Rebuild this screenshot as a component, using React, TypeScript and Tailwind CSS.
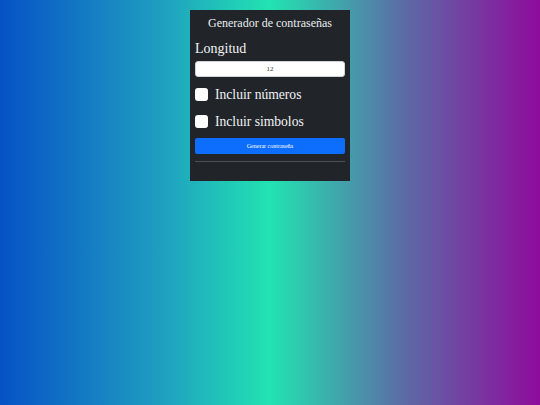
import React, { useState } from 'react'

export default function App() {
  const [length, setLength] = useState('12')
  const [numbers, setNumbers] = useState(false)
  const [symbols, setSymbols] = useState(false)

  return (
    <div
      className="w-[540px] h-[405px] bg-[linear-gradient(to_right,#0652c6,#1f9fc0_30%,#22e3b1_50%,#5d6aa6_75%,#8e0b9c)] pt-[10px] flex justify-center items-start"
      style={{ fontFamily: '"Liberation Serif", serif' }}
    >
      <div className="w-[160px] bg-[#212529] px-[5px] pt-[6px] pb-[19px] flex flex-col">
        <h1 className="text-[12px] leading-[15px] text-[#e9ecef] text-center">Generador de contraseñas</h1>
        <label className="mt-[9px] text-[14px] leading-[17px] text-[#f1f3f5]">Longitud</label>
        <input
          value={length}
          onChange={(e) => setLength(e.target.value)}
          className="mt-[4px] h-[16px] w-full rounded-[3px] bg-white border border-[#ced4da] text-center text-[7px] text-[#333] outline-none"
        />
        <label className="mt-[11px] flex items-center gap-[7px] text-[13.6px] leading-[13px] text-[#f1f3f5]">
          <input type="checkbox" checked={numbers} onChange={() => setNumbers(!numbers)} className="hidden" />
          <span className="w-[13px] h-[13px] rounded-[3px] bg-white shrink-0" />
          Incluir números
        </label>
        <label className="mt-[14px] flex items-center gap-[7px] text-[13.6px] leading-[13px] text-[#f1f3f5]">
          <input type="checkbox" checked={symbols} onChange={() => setSymbols(!symbols)} className="hidden" />
          <span className="w-[13px] h-[13px] rounded-[3px] bg-white shrink-0" />
          Incluir simbolos
        </label>
        <button className="mt-[10px] h-[16px] w-full rounded-[2px] bg-[#0d6efd] text-white text-[6px] leading-[16px]">
          Generar contraseña
        </button>
        <hr className="mt-[7px] border-t border-[#4b5055]" />
      </div>
    </div>
  )
}
